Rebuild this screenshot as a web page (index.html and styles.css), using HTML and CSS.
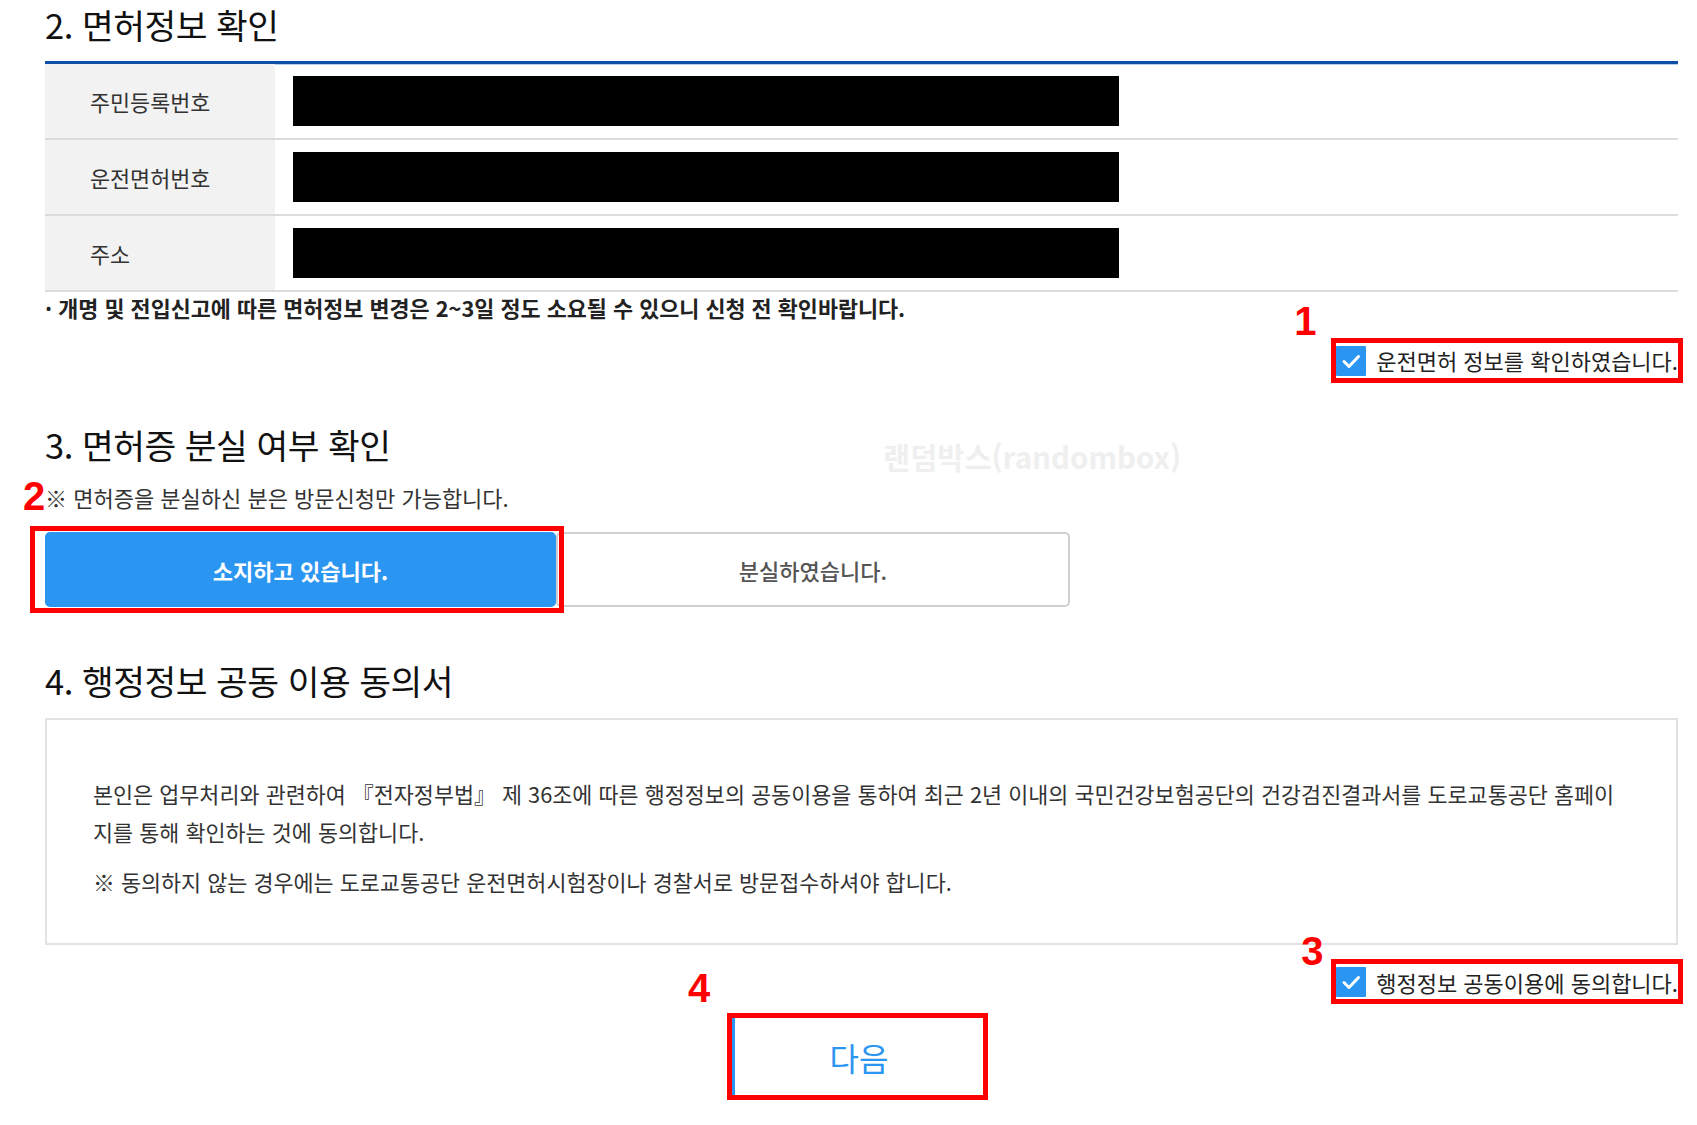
FILE: index.html
```html
<!DOCTYPE html>
<html lang="ko">
<head>
<meta charset="utf-8">
<title>면허정보 확인</title>
<link rel="stylesheet" href="styles.css">
</head>
<body>
<div class="page">
  <section class="sec sec-info">
    <h2 class="title">2. 면허정보 확인</h2>
    <div class="info-table">
      <div class="row">
        <div class="th">주민등록번호</div>
        <div class="td"><span class="mask"></span></div>
      </div>
      <div class="row">
        <div class="th">운전면허번호</div>
        <div class="td"><span class="mask"></span></div>
      </div>
      <div class="row">
        <div class="th">주소</div>
        <div class="td"><span class="mask"></span></div>
      </div>
    </div>
    <p class="info-note">· 개명 및 전입신고에 따른 면허정보 변경은 2~3일 정도 소요될 수 있으니 신청 전 확인바랍니다.</p>
    <div class="check-row">
      <label class="check check-1">
        <span class="num num-1">1</span>
        <span class="box"><svg viewBox="0 0 30 30" width="30" height="30"><polyline points="8,15.5 13,20.5 22.5,10.5" fill="none" stroke="#fff" stroke-width="3" stroke-linecap="round" stroke-linejoin="round"/></svg></span>
        <span class="check-text">운전면허 정보를 확인하였습니다.</span>
      </label>
    </div>
  </section>

  <section class="sec sec-lost">
    <div class="title-wrap">
      <h2 class="title">3. 면허증 분실 여부 확인</h2>
      <span class="watermark">랜덤박스(randombox)</span>
    </div>
    <p class="lost-note"><span class="num num-2">2</span>※ 면허증을 분실하신 분은 방문신청만 가능합니다.</p>
    <div class="btn-group">
      <button class="choice active" type="button">소지하고 있습니다.</button>
      <button class="choice" type="button">분실하였습니다.</button>
      <span class="mark-box"></span>
    </div>
  </section>

  <section class="sec sec-agree">
    <h2 class="title">4. 행정정보 공동 이용 동의서</h2>
    <div class="agree-box">
      <p>본인은 업무처리와 관련하여 『전자정부법』 제 36조에 따른 행정정보의 공동이용을 통하여 최근 2년 이내의 국민건강보험공단의 건강검진결과서를 도로교통공단 홈페이<br>지를 통해 확인하는 것에 동의합니다.</p>
      <p>※ 동의하지 않는 경우에는 도로교통공단 운전면허시험장이나 경찰서로 방문접수하셔야 합니다.</p>
    </div>
    <div class="check-row check-row-2">
      <label class="check check-2">
        <span class="num num-3">3</span>
        <span class="box"><svg viewBox="0 0 30 30" width="30" height="30"><polyline points="8,15.5 13,20.5 22.5,10.5" fill="none" stroke="#fff" stroke-width="3" stroke-linecap="round" stroke-linejoin="round"/></svg></span>
        <span class="check-text dotted">행정정보 공동이용에 동의합니다.</span>
      </label>
    </div>
    <div class="next-row">
      <button class="next" type="button"><span class="num num-4">4</span>다음</button>
    </div>
  </section>
</div>
</body>
</html>
```

FILE: styles.css
```css
* { box-sizing: border-box; }
html, body { margin: 0; padding: 0; background: #fff; }
body {
  font-family: "Noto Sans CJK KR", "Noto Sans", sans-serif;
  color: #222;
  width: 1697px;
  height: 1125px;
  overflow: hidden;
}
.page { padding: 0 19px 0 45px; }

.title {
  margin: 0;
  font-size: 34.5px;
  line-height: 40px;
  font-weight: 400;
  color: #111;
  letter-spacing: -0.5px;
}
.sec-info .title { margin-top: 4px; }

.info-table {
  margin-top: 17px;
  border-top: 3px solid #0d4ea6;
}
.row {
  display: flex;
  height: 76px;
  border-bottom: 2px solid #dcdcdc;
}
.row:first-child { box-shadow: inset 0 1px 0 #b3d0f0; }
.th {
  width: 230px;
  background: #f2f2f2;
  padding-left: 45px;
  display: flex;
  align-items: center;
  font-size: 21.8px;
  color: #333;
}
.td {
  flex: 1;
  display: flex;
  align-items: center;
  padding-left: 18px;
}
.mask {
  display: block;
  width: 826px;
  height: 50px;
  background: #000;
}

.info-note {
  margin: 3px 0 0;
  font-size: 21.8px;
  line-height: 26px;
  font-weight: 700;
  color: #222;
}

.check-row {
  display: flex;
  justify-content: flex-end;
  margin-top: 22px;
}
.check {
  position: relative;
  display: flex;
  align-items: center;
  gap: 10px;
  height: 35px;
  outline: 5px solid #ff0000;
}
.box {
  width: 30px;
  height: 30px;
  background: #2b95f2;
  display: flex;
  border-radius: 1px;
}
.check-text {
  font-size: 22px;
  line-height: 35px;
  color: #222;
}
.check-text.dotted {
  line-height: 33px;
  border-bottom: 1px dotted #444;
  margin-top: 2px;
}

.num {
  position: absolute;
  font-family: "Liberation Sans", Arial, sans-serif;
  font-weight: 700;
  font-size: 40px;
  line-height: 40px;
  color: #ff0000;
}
.num-1 { left: -42px; top: -42px; }
.num-3 { left: -35px; top: -33px; }

.sec-lost .title-wrap {
  position: relative;
  margin-top: 46px;
}
.watermark {
  position: absolute;
  left: 838px;
  top: 16px;
  font-size: 29.5px;
  line-height: 32px;
  font-weight: 700;
  color: #efefef;
  white-space: nowrap;
}
.lost-note {
  position: relative;
  margin: 18px 0 0;
  font-size: 22px;
  line-height: 30px;
  color: #333;
}
.num-2 { left: -22px; top: -6px; }

.btn-group {
  position: relative;
  display: flex;
  width: 1025px;
  margin-top: 20px;
}
.choice {
  height: 75px;
  font-family: inherit;
  font-size: 22px;
  font-weight: 700;
  border-radius: 5px;
  cursor: pointer;
}
.choice.active {
  width: 511px;
  background: #2b95f2;
  color: #fff;
  border: 0;
}
.choice:not(.active) {
  width: 514px;
  background: #fff;
  color: #555;
  border: 2px solid #cfcfcf;
  font-weight: 500;
}
.mark-box {
  position: absolute;
  left: -15px;
  top: -6px;
  width: 534px;
  height: 87px;
  border: 5px solid #ff0000;
}

.sec-agree .title { margin-top: 53px; }
.agree-box {
  margin-top: 18px;
  border: 2px solid #e2e2e2;
  padding: 55px 16px 42px 46px;
  height: 227px;
}
.agree-box p {
  margin: 0;
  font-size: 21.8px;
  line-height: 38px;
  color: #333;
}
.agree-box p + p { margin-top: 12px; }

.check-row-2 { margin-top: 19px; }

.next-row {
  display: flex;
  justify-content: center;
  margin-top: 19px;
  padding-right: 8px;
}
.next {
  position: relative;
  width: 251px;
  height: 77px;
  background: #fff;
  border: 0;
  border-left: 3px solid #2b95f2;
  outline: 5px solid #ff0000;
  font-family: inherit;
  font-size: 32px;
  color: #2b95f2;
  cursor: pointer;
}
.num-4 { left: -47px; top: -50px; }
```
